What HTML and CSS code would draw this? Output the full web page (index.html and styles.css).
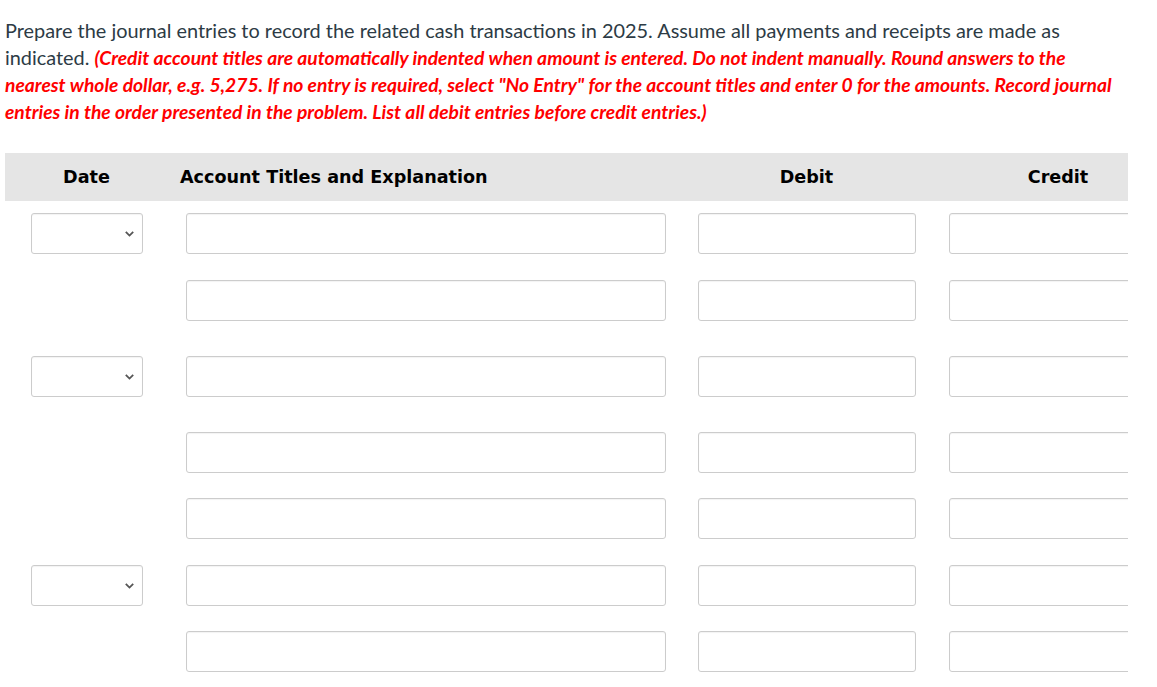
FILE: index.html
```html
<!DOCTYPE html>
<html>
<head>
<meta charset="utf-8">
<link rel="stylesheet" href="styles.css">
</head>
<body>
<div class="page">
  <p class="intro">Prepare the journal entries to record the related cash transactions in 2025. Assume all payments and receipts are made as<br>indicated. <em class="note">(Credit account titles are automatically indented when amount is entered. Do not indent manually. Round answers to the<br>nearest whole dollar, e.g. 5,275. If no entry is required, select "No Entry" for the account titles and enter 0 for the amounts. Record journal<br>entries in the order presented in the problem. List all debit entries before credit entries.)</em></p>

  <div class="journal">
    <div class="head">
      <div class="h-date">Date</div>
      <div class="h-acct">Account Titles and Explanation</div>
      <div class="h-num">Debit</div>
      <div class="h-num">Credit</div>
    </div>

    <div class="row first">
      <div class="cell-date"><div class="select"><svg class="chev" width="9" height="6" viewBox="0 0 9 6"><path d="M0.8 0.9 L4.5 4.6 L8.2 0.9" fill="none" stroke="#555" stroke-width="1.8"/></svg></div></div>
      <div class="cell-acct"><div class="box acct"></div></div>
      <div class="cell-num"><div class="box num"></div></div>
      <div class="cell-num"><div class="box num"></div></div>
    </div>
    <div class="row">
      <div class="cell-date"></div>
      <div class="cell-acct"><div class="box acct"></div></div>
      <div class="cell-num"><div class="box num"></div></div>
      <div class="cell-num"><div class="box num"></div></div>
    </div>

    <div class="row wide">
      <div class="cell-date"><div class="select"><svg class="chev" width="9" height="6" viewBox="0 0 9 6"><path d="M0.8 0.9 L4.5 4.6 L8.2 0.9" fill="none" stroke="#555" stroke-width="1.8"/></svg></div></div>
      <div class="cell-acct"><div class="box acct"></div></div>
      <div class="cell-num"><div class="box num"></div></div>
      <div class="cell-num"><div class="box num"></div></div>
    </div>
    <div class="row wide">
      <div class="cell-date"></div>
      <div class="cell-acct"><div class="box acct"></div></div>
      <div class="cell-num"><div class="box num"></div></div>
      <div class="cell-num"><div class="box num"></div></div>
    </div>
    <div class="row tight">
      <div class="cell-date"></div>
      <div class="cell-acct"><div class="box acct"></div></div>
      <div class="cell-num"><div class="box num"></div></div>
      <div class="cell-num"><div class="box num"></div></div>
    </div>

    <div class="row">
      <div class="cell-date"><div class="select"><svg class="chev" width="9" height="6" viewBox="0 0 9 6"><path d="M0.8 0.9 L4.5 4.6 L8.2 0.9" fill="none" stroke="#555" stroke-width="1.8"/></svg></div></div>
      <div class="cell-acct"><div class="box acct"></div></div>
      <div class="cell-num"><div class="box num"></div></div>
      <div class="cell-num"><div class="box num"></div></div>
    </div>
    <div class="row tight">
      <div class="cell-date"></div>
      <div class="cell-acct"><div class="box acct"></div></div>
      <div class="cell-num"><div class="box num"></div></div>
      <div class="cell-num"><div class="box num"></div></div>
    </div>
  </div>
</div>
</body>
</html>
```

FILE: styles.css
```css
html, body {
  margin: 0;
  padding: 0;
  background: #ffffff;
}

.page {
  padding: 17px 0 0 5px;
  width: 1123px;
}

.intro {
  margin: 0;
  font-family: Lato, "Open Sans", sans-serif;
  font-size: 19.9px;
  line-height: 27px;
  color: #2d3b45;
  white-space: nowrap;
}

.note {
  color: #ff0000;
  font-weight: bold;
  font-style: italic;
  font-size: 19.25px;
}

.journal {
  margin-top: 28px;
  width: 1123px;
  overflow: hidden;
}

.head,
.row {
  display: grid;
  grid-template-columns: 163px 514px 249px 254px;
  align-items: center;
}

.head {
  height: 48px;
  background: #e5e5e5;
  font-family: "DejaVu Sans", Verdana, sans-serif;
  font-weight: bold;
  font-size: 17.6px;
  color: #000;
}

.h-date,
.h-num {
  text-align: center;
}

.h-acct {
  padding-left: 12px;
}

.row {
  margin-top: 26px;
  height: 41px;
}

.row.first {
  margin-top: 12px;
}

.row.wide {
  margin-top: 35px;
}

.row.tight {
  margin-top: 25px;
}

.cell-date,
.cell-num {
  display: flex;
  justify-content: center;
}

.cell-acct {
  padding-left: 18px;
}

.select,
.box {
  box-sizing: border-box;
  height: 41px;
  border: 1px solid #cccccc;
  border-radius: 3px;
  background: #fff;
  box-shadow: inset 0 1px 1px rgba(0, 0, 0, 0.05);
}

.select {
  width: 112px;
  display: flex;
  align-items: center;
  justify-content: flex-end;
  padding-right: 8px;
}

.chev {
  display: block;
  margin-top: 1px;
}

.acct {
  width: 480px;
}

.num {
  width: 218px;
}
```
